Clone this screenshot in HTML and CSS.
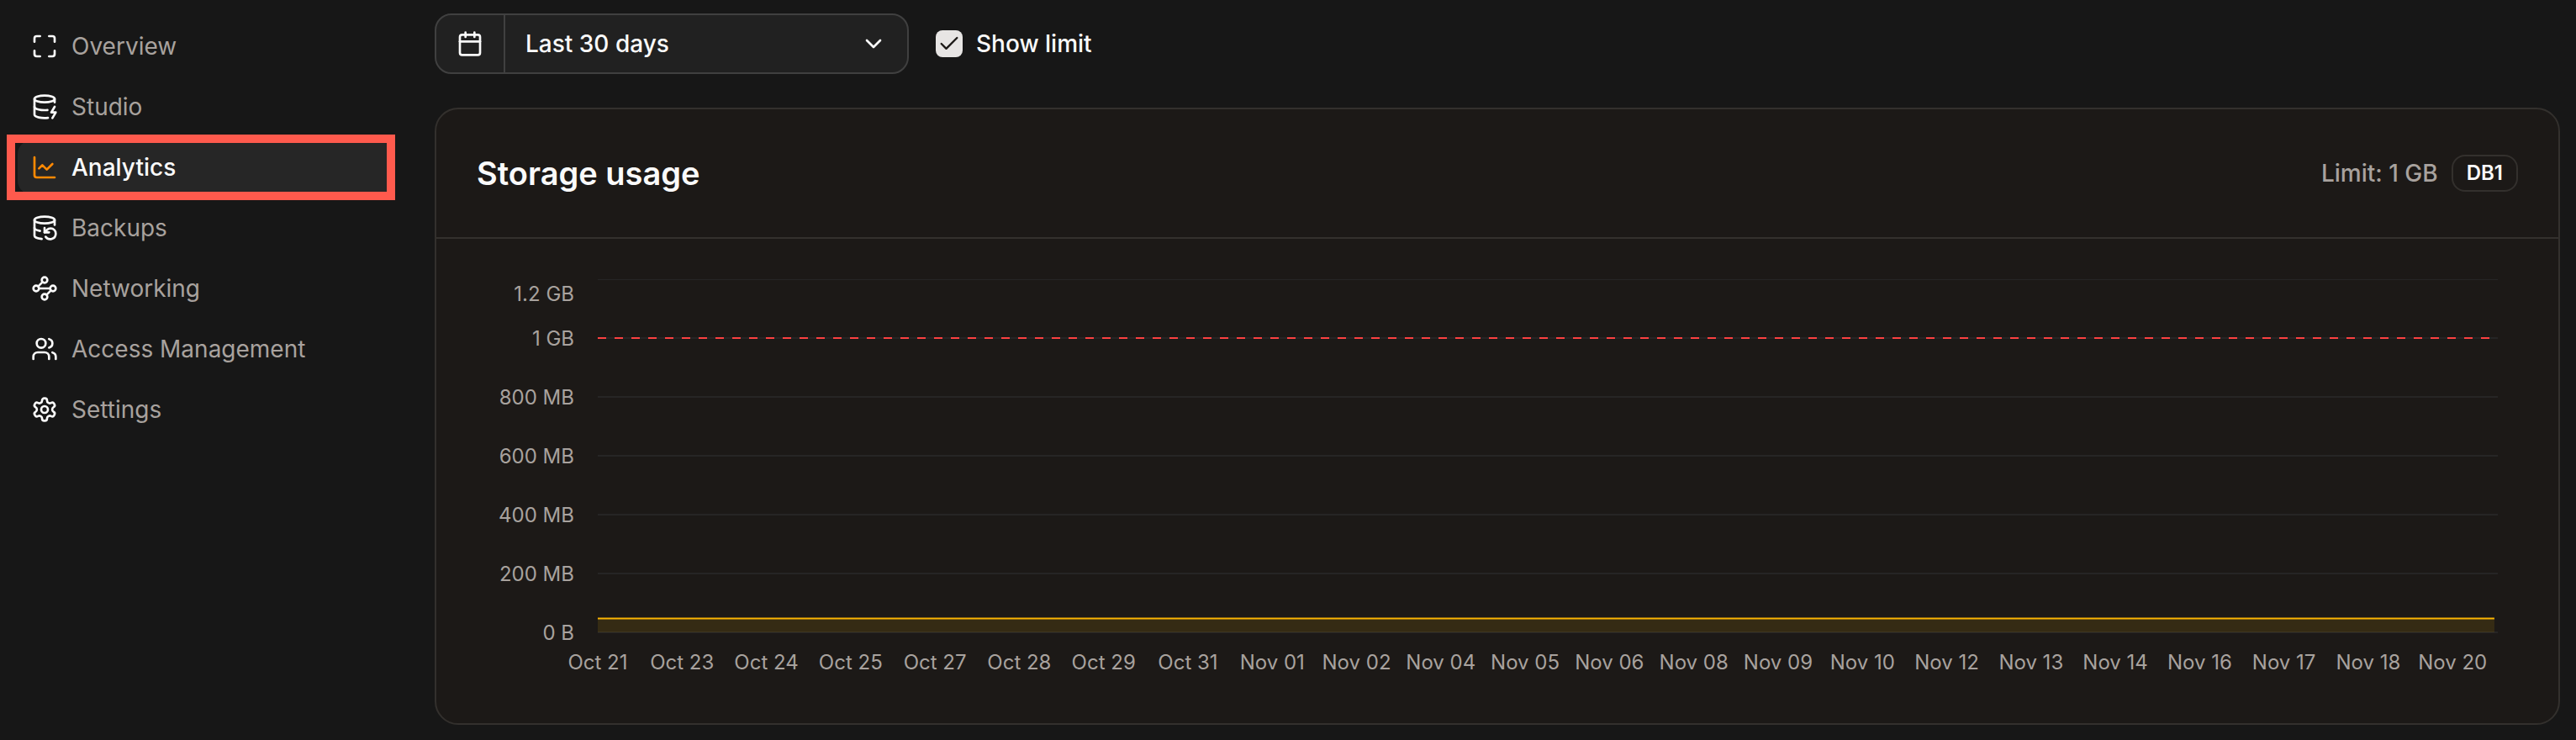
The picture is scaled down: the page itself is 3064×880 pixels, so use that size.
FILE: index.html
```html
<!DOCTYPE html>
<html lang="en">
<head>
<meta charset="utf-8">
<title>Analytics</title>
<link rel="stylesheet" href="styles.css">
</head>
<body>
<div class="layout">
  <aside class="sidebar">
    <nav class="nav" aria-label="Database">
      <a class="nav-item" href="#overview">
        <svg class="icon" viewBox="0 0 24 24"><path d="M8 3H5a2 2 0 0 0-2 2v3"/><path d="M21 8V5a2 2 0 0 0-2-2h-3"/><path d="M3 16v3a2 2 0 0 0 2 2h3"/><path d="M16 21h3a2 2 0 0 0 2-2v-3"/></svg>
        <span>Overview</span>
      </a>
      <a class="nav-item" href="#studio">
        <svg class="icon" viewBox="0 0 24 24"><ellipse cx="12" cy="5" rx="9" ry="3"/><path d="M3 5v14a9 3 0 0 0 12 2.84"/><path d="M21 5v3"/><path d="m21 12-3 5h4l-3 5"/><path d="M3 12a9 3 0 0 0 11.59 2.87"/></svg>
        <span>Studio</span>
      </a>
      <a class="nav-item nav-item-active" href="#analytics" aria-current="page">
        <svg class="icon" viewBox="0 0 24 24"><path d="M3 3v16a2 2 0 0 0 2 2h16"/><path d="m19 9-5 5-4-4-3 3"/></svg>
        <span>Analytics</span>
      </a>
      <a class="nav-item" href="#backups">
        <svg class="icon" viewBox="0 0 24 24"><ellipse cx="12" cy="5" rx="9" ry="3"/><path d="M3 12a9 3 0 0 0 5 2.69"/><path d="M21 9.3V5"/><path d="M3 5v14a9 3 0 0 0 6.47 2.88"/><path d="M12 12v4h4"/><path d="M13 20a5 5 0 0 0 9-3 4.500 4.500 0 0 0-4.500-4.500c-1.330 0-2.540.540-3.410 1.410L12 16"/></svg>
        <span>Backups</span>
      </a>
      <a class="nav-item" href="#networking">
        <svg class="icon" viewBox="0 0 24 24"><circle cx="12" cy="4.500" r="2.500"/><path d="m10.200 6.300-3.900 3.900"/><circle cx="4.500" cy="12" r="2.500"/><path d="M7 12h10"/><circle cx="19.500" cy="12" r="2.500"/><path d="m13.800 17.700 3.900-3.900"/><circle cx="12" cy="19.500" r="2.500"/></svg>
        <span>Networking</span>
      </a>
      <a class="nav-item" href="#access">
        <svg class="icon" viewBox="0 0 24 24"><path d="M16 21v-2a4 4 0 0 0-4-4H6a4 4 0 0 0-4 4v2"/><circle cx="9" cy="7" r="4"/><path d="M22 21v-2a4 4 0 0 0-3-3.870"/><path d="M16 3.130a4 4 0 0 1 0 7.750"/></svg>
        <span>Access Management</span>
      </a>
      <a class="nav-item" href="#settings">
        <svg class="icon" viewBox="0 0 24 24"><path d="M12.220 2h-.440a2 2 0 0 0-2 2v.180a2 2 0 0 1-1 1.730l-.430.250a2 2 0 0 1-2 0l-.150-.080a2 2 0 0 0-2.730.730l-.220.380a2 2 0 0 0 .730 2.730l.150.100a2 2 0 0 1 1 1.720v.510a2 2 0 0 1-1 1.740l-.150.090a2 2 0 0 0-.730 2.730l.220.380a2 2 0 0 0 2.730.730l.150-.080a2 2 0 0 1 2 0l.430.250a2 2 0 0 1 1 1.730V20a2 2 0 0 0 2 2h.440a2 2 0 0 0 2-2v-.180a2 2 0 0 1 1-1.730l.430-.250a2 2 0 0 1 2 0l.150.080a2 2 0 0 0 2.730-.730l.220-.390a2 2 0 0 0-.730-2.730l-.150-.080a2 2 0 0 1-1-1.740v-.500a2 2 0 0 1 1-1.740l.150-.090a2 2 0 0 0 .730-2.730l-.220-.380a2 2 0 0 0-2.730-.730l-.150.080a2 2 0 0 1-2 0l-.430-.250a2 2 0 0 1-1-1.730V4a2 2 0 0 0-2-2z"/><circle cx="12" cy="12" r="3"/></svg>
        <span>Settings</span>
      </a>
    </nav>
  </aside>

  <main class="main">
    <div class="toolbar">
      <div class="range">
        <label class="range-label" for="range" aria-label="Date range">
          <svg class="icon" viewBox="0 0 24 24"><path d="M8 2v4"/><path d="M16 2v4"/><rect x="3" y="4" width="18" height="18" rx="2"/><path d="M3 10h18"/></svg>
        </label>
        <select class="range-select" id="range">
          <option>Last 30 days</option>
        </select>
        <svg class="icon range-chevron" viewBox="0 0 24 24"><path d="m6 9 6 6 6-6"/></svg>
      </div>
      <div class="toggle">
        <span class="toggle-box">
          <input class="toggle-input" type="checkbox" id="show-limit" checked>
          <svg class="toggle-check" viewBox="0 0 24 24"><path d="M20 6 9 17l-5-5"/></svg>
        </span>
        <label for="show-limit">Show limit</label>
      </div>
    </div>

    <section class="card">
      <header class="card-header">
        <h2 class="card-title">Storage usage</h2>
        <div class="limit">
          <span>Limit: 1 GB</span>
          <span class="badge">DB1</span>
        </div>
      </header>
      <div class="chart">
        <div class="y-axis">
          <span>1.2 GB</span>
          <span>1 GB</span>
          <span>800 MB</span>
          <span>600 MB</span>
          <span>400 MB</span>
          <span>200 MB</span>
          <span>0 B</span>
        </div>
        <div class="plot-area">
          <svg class="plot" role="img" aria-label="Storage usage over the last 30 days">
            <rect class="grid-line" y="0" width="100%" height="1"/>
            <rect class="grid-line" y="69" width="100%" height="2"/>
            <rect class="grid-line" y="139" width="100%" height="2"/>
            <rect class="grid-line" y="209" width="100%" height="2"/>
            <rect class="grid-line" y="279" width="100%" height="2"/>
            <rect class="grid-line" y="349" width="100%" height="2"/>
            <rect class="grid-line" y="419" width="100%" height="2"/>
            <rect class="usage-area" y="403" width="99.820%" height="17"/>
            <line class="usage-line" x1="0" y1="403.500" x2="99.820%" y2="403.500"/>
            <line class="limit-line" x1="0" y1="70" x2="99.820%" y2="70"/>
          </svg>
          <div class="x-axis">
            <span>Oct 21</span><span>Oct 23</span><span>Oct 24</span><span>Oct 25</span><span>Oct 27</span><span>Oct 28</span><span>Oct 29</span><span>Oct 31</span><span>Nov 01</span><span>Nov 02</span><span>Nov 04</span><span>Nov 05</span><span>Nov 06</span><span>Nov 08</span><span>Nov 09</span><span>Nov 10</span><span>Nov 12</span><span>Nov 13</span><span>Nov 14</span><span>Nov 16</span><span>Nov 17</span><span>Nov 18</span><span>Nov 20</span>
          </div>
        </div>
      </div>
    </section>
  </main>
</div>
</body>
</html>
```

FILE: styles.css
```css
* {
  box-sizing: border-box;
}

body {
  margin: 0;
  background: #171717;
  color: #fafafa;
  font-family: Inter, "Liberation Sans", sans-serif;
  font-size: 28px;
  line-height: 40px;
}

.layout {
  display: flex;
  min-height: 100vh;
}

.icon {
  display: block;
  flex: none;
  width: 32px;
  height: 32px;
  fill: none;
  stroke: #fafafa;
  stroke-width: 2;
  stroke-linecap: round;
  stroke-linejoin: round;
}

/* Sidebar */

.sidebar {
  flex: none;
  width: 517px;
  padding: 23px 48px 23px 21px;
}

.nav {
  display: flex;
  flex-direction: column;
  gap: 8px;
}

.nav-item {
  position: relative;
  display: flex;
  align-items: center;
  gap: 16px;
  height: 64px;
  padding: 0 16px;
  border-radius: 16px;
  color: #a8a29e;
  text-decoration: none;
}

.nav-item-active {
  background: #262626;
  color: #fafafa;
  font-weight: 500;
}

.nav-item-active .icon {
  stroke: #ff8904;
}

.nav-item-active::after {
  content: "";
  position: absolute;
  inset: -7px -1px -7px -13px;
  border: 10px solid #ff5a4d;
}

/* Toolbar */

.main {
  flex: 1;
  min-width: 0;
  padding: 16px 19px 16px 0;
}

.toolbar {
  display: flex;
  align-items: center;
  gap: 32px;
  margin-bottom: 40px;
  font-weight: 500;
}

.range {
  position: relative;
  display: flex;
  width: 564px;
  height: 72px;
  overflow: hidden;
  border: 2px solid #404040;
  border-radius: 20px;
  background: #212121;
}

.range-label {
  display: flex;
  align-items: center;
  padding: 0 24px;
  border-right: 2px solid #404040;
}

.range-select {
  flex: 1;
  min-width: 0;
  padding: 0 64px 0 24px;
  border: 0;
  appearance: none;
  background: transparent;
  color: inherit;
  font: inherit;
}

.range-chevron {
  position: absolute;
  top: 18px;
  right: 24px;
  pointer-events: none;
}

.toggle {
  display: flex;
  align-items: center;
  gap: 16px;
}

.toggle-box {
  position: relative;
  display: flex;
}

.toggle-input {
  width: 32px;
  height: 32px;
  margin: 0;
  appearance: none;
  border-radius: 8px;
  background: #e7e5e4;
}

.toggle-check {
  position: absolute;
  inset: 2px;
  fill: none;
  stroke: #1c1917;
  stroke-width: 2;
  stroke-linecap: round;
  stroke-linejoin: round;
  pointer-events: none;
}

/* Card */

.card {
  border: 2px solid #33302d;
  border-radius: 28px;
  background: #1c1917;
}

.card-header {
  display: flex;
  align-items: center;
  justify-content: space-between;
  height: 154px;
  padding: 0 48px;
  border-bottom: 2px solid #33302d;
}

.card-title {
  margin: 0;
  font-size: 38px;
  font-weight: 600;
  line-height: 48px;
}

.limit {
  display: flex;
  align-items: center;
  gap: 16px;
  color: #a8a29e;
  font-weight: 500;
}

.badge {
  padding: 4px 16px;
  border: 2px solid #33302d;
  border-radius: 16px;
  color: #fafafa;
  font-size: 24px;
  font-weight: 600;
  line-height: 32px;
}

/* Chart */

.chart {
  display: flex;
  gap: 28px;
  padding: 48px 72px 54px 48px;
  color: #a8a29e;
  font-size: 24px;
  line-height: 36px;
}

.y-axis {
  display: flex;
  flex-direction: column;
  flex: none;
  width: 116px;
  height: 456px;
  text-align: right;
}

.y-axis span {
  line-height: 70px;
}

.y-axis span:first-child {
  line-height: 36px;
}

.plot-area {
  flex: 1;
  min-width: 0;
}

.plot {
  display: block;
  width: 100%;
  height: 422px;
}

.grid-line {
  fill: #262525;
}

.usage-area {
  fill: #f0b100;
  fill-opacity: 0.12;
}

.usage-line {
  stroke: #fbb503;
  stroke-width: 2;
}

.limit-line {
  stroke: #fb4141;
  stroke-width: 2;
  stroke-dasharray: 10 10;
}

/* Half a cell overhangs on the left so each date centres on its tick. */
.x-axis {
  display: grid;
  grid-template-columns: repeat(23, minmax(0, 1fr));
  margin: 16px 0 0 -2.22%;
  width: 102.06%;
  text-align: center;
  white-space: nowrap;
}
```
